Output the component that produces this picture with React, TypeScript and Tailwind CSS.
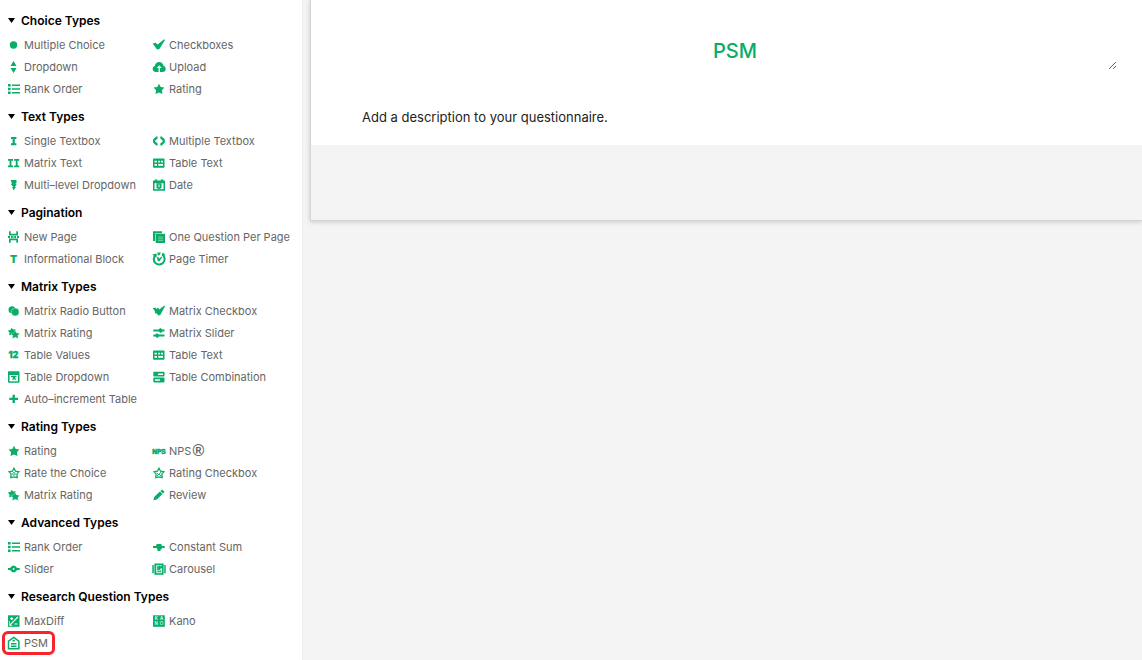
import { useState, type ReactNode } from "react";

const star = "M6 0.8 7.7 4 11.400 4.600 8.900 7.200 9.500 11 6 9.400 2.500 11 3.100 7.200 0.600 4.600 4.300 4Z";
const starOutline = "M6 1.200 7.600 4.200 10.900 4.800 8.900 7.200 9.200 10.700 6 9.900 2.800 10.700 3.100 7.200 1.100 4.800 4.400 4.200Z";

const icons: Record<string, ReactNode> = {
  dot: <circle cx="5.5" cy="6" r="3.7" />,
  updown: <path d="M5.5 0 8.500 4.900h-6ZM5.5 12 8.500 7.100h-6Z" />,
  list: (
    <path d="M0 1h2.600v2.500H0zM0 4.800h2.600v2.500H0zM0 8.600h2.600v2.500H0zM3.800 1.400H12v1.600H3.800zM3.800 5.200H12v1.600H3.800zM3.800 9H12v1.600H3.800z" />
  ),
  check: <path d="M-0.300 4.400 2.600 3.800 4.600 5.600 11.200 0.300 12 1.100 6.400 10 4 10.600Z" />,
  upload: (
    <>
      <path d="M3 11C0.800 11-0.300 9.600-0.300 8c0-1.500.9-2.600 2.200-3C2.300 2.300 4 0.900 6.200 0.900s3.900 1.400 4.300 3.900C11.900 5.200 12.700 6.400 12.700 8c0 1.700-1.200 3-3.200 3Z" />
      <path d="M6.200 4.200 8.800 7H6.900v4H5.500V7H3.600Z" fill="#fff" />
    </>
  ),
  star: <path d={star} />,
  beam: <path d="M3 2h5.400v2H6.800v4.200h1.600v2H3v-2h1.600V4H3Z" />,
  beams: (
    <path d="M0 2h5v1.800H3.400v4.600H5v1.800H0V8.400h1.600V3.800H0ZM6.200 2h5v1.800H9.600v4.600h1.600v1.800h-5V8.400h1.600V3.800H6.200Z" />
  ),
  levels: <path d="M2.500 1h6v3.200H7.600v1h1.200L6.900 8h1L5.500 11.600 4.200 8h1L2.700 4.700h1.500Z" />,
  brackets: (
    <path
      d="M4.600 2.700H3.700L1.200 5v2l2.500 2.400h0.900M7.300 2.700h1L10.700 5v2L8.300 9.400h-1"
      fill="none"
      stroke="currentColor"
      strokeWidth="2.300"
    />
  ),
  table: (
    <>
      <rect y="1.500" width="11.500" height="9.200" rx="0.800" />
      <path
        d="M1.500 3.800h2.500v1.700H1.500zM5.200 3.800h1.900v1.700H5.200zM8 3.800h2v1.700H8zM1.500 7h2.500v1.700H1.500zM5.200 7h4.800v1.700H5.200z"
        fill="#fff"
      />
    </>
  ),
  date: (
    <>
      <path d="M1.800 0.500h2.400v1h3.600v-1h2.400v1H12V11.700H0V1.500h1.800Z" />
      <path d="M1.500 4.200h9v6h-9z" fill="#fff" />
      <path d="M3.500 4.200h5v4.700L6 10.200 3.500 8.900Z" />
      <path d="M5.500 5.500h1v2.800h-1z" fill="#fff" />
    </>
  ),
  page: (
    <path d="M1 0.300h1.700v2.500h5.600V0.300H10v4.200H1ZM1 11.700h1.700V9.200h5.600v2.500H10V7.500H1ZM0 4.900h2v2.200H0zM3 4.900h1.600v2.200H3zM6.400 4.900H8v2.200H6.400zM9 4.900h2v2.200H9zM4.600 5.500h1.800v1H4.600z" />
  ),
  pages: (
    <>
      <path d="M0 0.300h9v2H2.200v7.700H0z" />
      <rect x="2.700" y="2.800" width="9.300" height="9.200" rx="0.500" />
      <path d="M5 5.500h5v1H5zM5 7.300h5v1H5zM5 9.100h5v1H5z" fill="#fff" opacity="0.400" />
    </>
  ),
  letterT: (
    <text x="5.500" y="9.800" textAnchor="middle" fontSize="10.500" fontWeight="900">
      T
    </text>
  ),
  timer: (
    <>
      <path
        d="M3 1.800A5.400 5.400 0 1 0 9.300 1.700"
        fill="none"
        stroke="currentColor"
        strokeWidth="2"
      />
      <path d="M4.300-0.600H8L6.500 2.200H4.800ZM9.800-0.400l2.400 2.200-1.700 1.700L8.600 2ZM-0.600 1.600 3.600 0.600v4L1.800 3.800ZM3.600 3.800 5.500 4.600 7.600 7 6.500 8.200H5Z" />
      <path d="M6 7 8.800 4" stroke="currentColor" strokeWidth="1.400" />
    </>
  ),
  circles: (
    <>
      <circle cx="4" cy="4.700" r="3.500" />
      <circle cx="7.200" cy="7" r="3.900" stroke="#fff" strokeWidth="0.400" />
    </>
  ),
  stars: (
    <>
      <path d="M3.700 0.800 5 2.400 7.600 2.200 6.800 5 6.500 8.300 4 7.400 1.200 8.200 1.500 5.400-0.200 3.500 2.500 3Z" />
      <path
        d="M7 3.300 8.400 5.800 11.700 6.500 9.800 8.600 10.300 11.600 7.300 10.300 4.300 11.600 4.800 8.600 2.800 6.300 5.800 5.800Z"
        stroke="#fff"
        strokeWidth="0.300"
      />
    </>
  ),
  numbers: (
    <text
      x="5.500"
      y="9.300"
      textAnchor="middle"
      fontSize="9"
      fontWeight="900"
      stroke="currentColor"
      strokeWidth="0.300"
    >
      12
    </text>
  ),
  dropTable: (
    <>
      <rect y="0.300" width="11.500" height="11.500" rx="0.800" />
      <path d="M1.500 4h8.500v6.300H1.500z" fill="#fff" />
      <path d="M3 4.800h5.500v1.500H6.900L8.500 9.500 6.500 8.300 4.200 9.300 5 6.300H3Z" />
    </>
  ),
  plus: <path d="M4.500 1.800h2.400v2.900h3.100v2.400H6.900V10H4.500V7.100H1.300V4.700h3.200z" />,
  checks: (
    <path d="M-0.300 3.200 2.300 2.600 3.400 4 5 2.400 6.300 4.500 11.300 0.500 12 1.200 7.300 10 5.200 10.500 3.800 8.600 2 8.200 1.800 6Z" />
  ),
  sliders: (
    <path d="M0.300 2.500H5.500L7.300 0.900 9.500 2.500h2v2h-2L7.800 5.900 5.500 4.500H0.300ZM0.300 7.500h2L4 6.200 6 7.500h5.500v2H6L4.300 11 2.300 9.500h-2Z" />
  ),
  combo: (
    <>
      <rect x="0.300" y="0.800" width="11.200" height="4.800" rx="0.800" />
      <rect x="0.300" y="6.600" width="11.200" height="4.800" rx="0.800" />
      <path d="M5 2.400h5V4H5zM1.900 8.200h5v1.600h-5z" fill="#fff" />
    </>
  ),
  nps: (
    <text
      x="6"
      y="8.500"
      textAnchor="middle"
      fontSize="6.500"
      fontWeight="700"
      fontFamily="Liberation Sans, sans-serif"
      stroke="currentColor"
      strokeWidth="0.600"
    >
      NPS
    </text>
  ),
  starDot: (
    <>
      <path d={starOutline} fill="none" stroke="currentColor" strokeWidth="1.300" />
      <circle cx="6" cy="6.900" r="1.300" fill="none" stroke="currentColor" strokeWidth="0.900" />
    </>
  ),
  starCheck: (
    <>
      <path d={starOutline} fill="none" stroke="currentColor" strokeWidth="1.300" />
      <path d="M3.800 5.800 5.700 7.700 8.300 4.900M4 9l2-2 2 2" fill="none" stroke="currentColor" />
    </>
  ),
  pencil: <path d="M0.400 11.300 1.200 8 6.900 2.500 9.500 5 3.900 10.500ZM7.400 2.100 9.100 0.500 11.600 2.900 10 4.500Z" />,
  sum: <path d="M0 4.900h3L3.800 2.900h4.400l0.800 2H11.700v2.200H9L8.300 8.400 7.500 8.400V10H4.600V8.400L3.400 7.100H0Z" />,
  slider: (
    <>
      <path d="M0 5h2L4.300 2.700h2.600L9.200 5H11.700v2H9.200L6.900 9.300H4.300L2 7H0Z" />
      <circle cx="5.600" cy="6" r="0.900" fill="#fff" />
    </>
  ),
  carousel: (
    <>
      <path d="M-0.700 2h1.500v8.300h-1.500zM11.200 2h1.500v8.300h-1.500zM1.400 0.500h9.200v11.200H1.400z" />
      <path
        d="M6.500 2.700H3.700v7h4.900V6M7 2.700h1.600M4 8.200l1.400-1 1.200 0.800L8.500 5"
        fill="none"
        stroke="#fff"
        strokeWidth="0.900"
      />
    </>
  ),
  maxdiff: (
    <>
      <path d="M0 0.300h11.500v11.500H0z" />
      <path
        d="M2 9.900 9.900 2M3.700 2.200v2.800M2.300 3.600h2.800M6.500 9h3"
        stroke="#fff"
        strokeWidth="1.100"
      />
      <path d="M1.400 6v4.400h3" stroke="#fff" strokeWidth="0.700" fill="none" />
    </>
  ),
  kano: (
    <>
      <path d="M0 0.300h11.800v11.500H0z" />
      <g fill="#fff" fontSize="4.500" fontWeight="500" textAnchor="middle">
        <text x="3.300" y="5">K</text>
        <text x="8.500" y="5">A</text>
        <text x="3.300" y="10">N</text>
        <text x="8.500" y="10">O</text>
      </g>
    </>
  ),
  tag: (
    <>
      <path
        d="M5.700 0.400 10.900 4.200V11.700H0.500V4.200Z"
        fill="none"
        stroke="currentColor"
        strokeWidth="1.500"
      />
      <path d="M4.600 2.900h2.200v1.700H4.600zM3 5.900h5.500v1.500H3zM3 8.500h5.500V10H3z" />
    </>
  ),
};

type Item = { icon: string; label: string; marked?: boolean; registered?: boolean };

const sections: { title: string; items: Item[] }[] = [
  {
    title: "Choice Types",
    items: [
      { icon: "dot", label: "Multiple Choice" },
      { icon: "check", label: "Checkboxes" },
      { icon: "updown", label: "Dropdown" },
      { icon: "upload", label: "Upload" },
      { icon: "list", label: "Rank Order" },
      { icon: "star", label: "Rating" },
    ],
  },
  {
    title: "Text Types",
    items: [
      { icon: "beam", label: "Single Textbox" },
      { icon: "brackets", label: "Multiple Textbox" },
      { icon: "beams", label: "Matrix Text" },
      { icon: "table", label: "Table Text" },
      { icon: "levels", label: "Multi–level Dropdown" },
      { icon: "date", label: "Date" },
    ],
  },
  {
    title: "Pagination",
    items: [
      { icon: "page", label: "New Page" },
      { icon: "pages", label: "One Question Per Page" },
      { icon: "letterT", label: "Informational Block" },
      { icon: "timer", label: "Page Timer" },
    ],
  },
  {
    title: "Matrix Types",
    items: [
      { icon: "circles", label: "Matrix Radio Button" },
      { icon: "checks", label: "Matrix Checkbox" },
      { icon: "stars", label: "Matrix Rating" },
      { icon: "sliders", label: "Matrix Slider" },
      { icon: "numbers", label: "Table Values" },
      { icon: "table", label: "Table Text" },
      { icon: "dropTable", label: "Table Dropdown" },
      { icon: "combo", label: "Table Combination" },
      { icon: "plus", label: "Auto–increment Table" },
    ],
  },
  {
    title: "Rating Types",
    items: [
      { icon: "star", label: "Rating" },
      { icon: "nps", label: "NPS", registered: true },
      { icon: "starDot", label: "Rate the Choice" },
      { icon: "starCheck", label: "Rating Checkbox" },
      { icon: "stars", label: "Matrix Rating" },
      { icon: "pencil", label: "Review" },
    ],
  },
  {
    title: "Advanced Types",
    items: [
      { icon: "list", label: "Rank Order" },
      { icon: "sum", label: "Constant Sum" },
      { icon: "slider", label: "Slider" },
      { icon: "carousel", label: "Carousel" },
    ],
  },
  {
    title: "Research Question Types",
    items: [
      { icon: "maxdiff", label: "MaxDiff" },
      { icon: "kano", label: "Kano" },
      { icon: "tag", label: "PSM", marked: true },
    ],
  },
];

function TypeButton({ item }: { item: Item }) {
  return (
    <button
      type="button"
      className="relative flex h-[22px] w-fit items-center gap-1 whitespace-nowrap text-[11px] text-[#666]"
    >
      <svg
        viewBox="0 0 12 12"
        className="h-3 w-3 shrink-0 overflow-visible text-[#07ad68]"
        fill="currentColor"
        aria-hidden="true"
      >
        {icons[item.icon]}
      </svg>
      <span className="flex items-center gap-px">
        {item.label}
        {item.registered && (
          <span className="font-['Liberation_Sans',sans-serif] text-base font-bold leading-none">
            ®
          </span>
        )}
      </span>
      {item.marked && (
        <span className="pointer-events-none absolute -left-1.5 -right-[7px] -top-px -bottom-px rounded-md border-3 border-[#f8232b]" />
      )}
    </button>
  );
}

function Section({ title, items }: { title: string; items: Item[] }) {
  const [open, setOpen] = useState(true);
  return (
    <section className="pb-px">
      <h2>
        <button
          type="button"
          aria-expanded={open}
          onClick={() => setOpen(!open)}
          className="flex h-[29px] items-center gap-1.5 pt-0.5 text-xs font-semibold text-black"
        >
          <svg viewBox="0 0 7 5" className="h-[5px] w-[7px]" aria-hidden="true">
            <path d="M0 0h7L3.500 5Z" />
          </svg>
          {title}
        </button>
      </h2>
      {open && (
        <div className="grid grid-cols-[145px_1fr]">
          {items.map((item) => (
            <TypeButton key={item.label} item={item} />
          ))}
        </div>
      )}
    </section>
  );
}

export default function App() {
  return (
    <div className="flex min-h-screen bg-[#f4f4f4] font-['Inter','Liberation_Sans',sans-serif]">
      <aside className="w-[302px] shrink-0 bg-white pl-2 pt-[5px]">
        {sections.map((section) => (
          <Section key={section.title} {...section} />
        ))}
      </aside>
      <main className="min-w-0 flex-1 border-l border-[#eee] pl-[7px]">
        <div className="border-b border-l border-[#d4d4d4] pb-[75px] shadow-[0_1px_5px_rgba(0,0,0,0.18)]">
          <div className="bg-white pb-[17px] pl-[42px] pr-[25px] pt-8">
            <textarea
              aria-label="Questionnaire title"
              defaultValue="PSM"
              rows={1}
              className="block h-[38px] w-full resize-y overflow-hidden py-1 text-center text-xl leading-[30px] font-medium text-[#07ad68] outline-none"
            />
            <p className="px-[9px] pt-[37px] text-[13px] leading-[21px] text-[#222]">
              Add a description to your questionnaire.
            </p>
          </div>
        </div>
      </main>
    </div>
  );
}
